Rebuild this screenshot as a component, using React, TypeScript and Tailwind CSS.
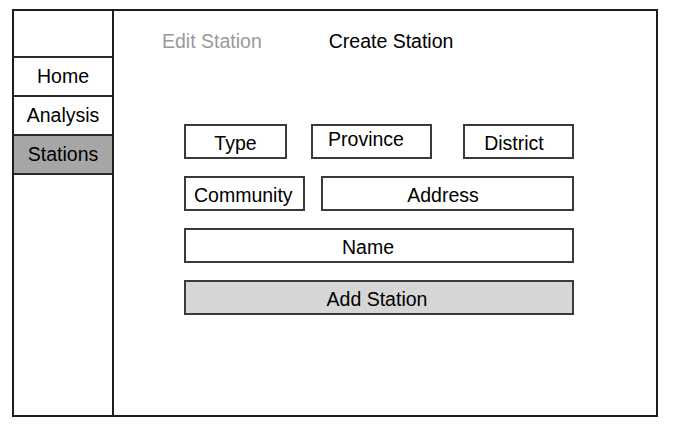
import React from "react";

const SideItem = ({ label, active, last }: { label: string; active?: boolean; last?: boolean }) => {
  return (
    <div
      className={`flex items-center justify-center border-t-2 border-[#2a2a2a] ${last ? "border-b-2 h-[41px]" : "h-[39px]"} ${
        active ? "bg-[#a6a6a6]" : "bg-white"
      }`}
    >
      {label}
    </div>
  );
};

const Field = ({ label, className }: { label: string; className: string }) => {
  return (
    <div className={`flex h-[35px] items-center border-2 border-[#3a3a3a] leading-[22px] ${className}`}>
      {label}
    </div>
  );
};

const App = () => {
  return (
    <div
      className="h-[430px] w-[675px] overflow-hidden bg-white pl-[12px] pt-[9px] text-[19.5px] text-black"
      style={{ fontFamily: '"Liberation Sans", Arial, sans-serif' }}
    >
      <div className="flex h-[408px] w-[646px] border-2 border-[#1e1e1e]">
        {/* Sidebar */}
        <div className="flex w-[100px] flex-col border-r-2 border-[#1e1e1e]">
          <div className="h-[45px]" />
          <SideItem label="Home" />
          <SideItem label="Analysis" />
          <SideItem label="Stations" active last />
        </div>

        {/* Main */}
        <div className="flex flex-1 flex-col">
          <div className="flex pt-[19px] leading-[22px]">
            <span className="ml-[48px] text-[#999999]">Edit Station</span>
            <span className="ml-[67px]">Create Station</span>
          </div>

          <div className="ml-[70px] mt-[72px] flex w-[390px] flex-col gap-[17px]">
            <div className="flex">
              <Field label="Type" className="w-[103px] justify-center pt-[3px]" />
              <Field label="Province" className="ml-[24px] w-[121px] justify-center pb-[5px] pr-[11px]" />
              <Field label="District" className="ml-[31px] w-[111px] justify-center pt-[3px] pr-[9px]" />
            </div>
            <div className="flex">
              <Field label="Community" className="w-[121px] pl-[8px] pt-[2px]" />
              <Field label="Address" className="ml-[16px] flex-1 justify-center pr-[9px] pt-[2px]" />
            </div>
            <Field label="Name" className="w-full justify-center pr-[22px] pt-[2px]" />
            <div className="flex h-[35px] w-full items-center justify-center border-2 border-[#3a3a3a] bg-[#d6d6d6] pr-[4px] pt-[2px] leading-[22px]">
              Add Station
            </div>
          </div>
        </div>
      </div>
    </div>
  );
};

export default App;
